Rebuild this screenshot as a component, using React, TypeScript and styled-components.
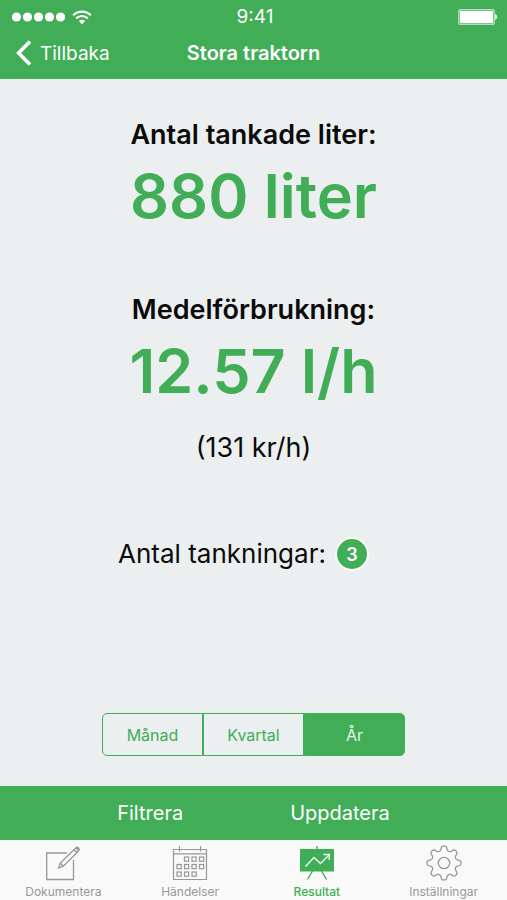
import React, { useState } from "react";
import styled, { createGlobalStyle } from "styled-components";

const green = "#41ad56";
const grey = "#98989a";

const GlobalStyle = createGlobalStyle`
  * { box-sizing: border-box; }
  body {
    margin: 0;
    background: #ebeff0;
    font-family: Inter, "Liberation Sans", sans-serif;
    -webkit-font-smoothing: antialiased;
  }
  button { font-family: inherit; cursor: pointer; }
  h1, h2, p { margin: 0; }
`;

const Screen = styled.div`
  display: flex;
  flex-direction: column;
  min-height: 100vh;
`;

const Header = styled.header`
  background: ${green};
  color: #fff;
  padding-bottom: 7px;
`;

const StatusBar = styled.div`
  display: grid;
  grid-template-columns: 1fr auto 1fr;
  align-items: center;
  height: 34px;
  padding: 0 9px 0 12px;
`;

const Signal = styled.div`
  display: flex;
  align-items: center;
  gap: 7px;
`;

const Clock = styled.time`
  font-size: 19px;
  line-height: 34px;
`;

const BatterySlot = styled.div`
  display: flex;
  justify-content: flex-end;
`;

const NavBar = styled.nav`
  display: grid;
  grid-template-columns: 1fr auto 1fr;
  align-items: center;
  height: 38px;
  padding: 0 16px;
`;

const BackLink = styled.a`
  display: flex;
  align-items: center;
  gap: 8px;
  color: #fff;
  font-size: 19px;
  text-decoration: none;
`;

const Title = styled.h1`
  font-size: 20px;
  font-weight: 600;
`;

const Main = styled.main`
  flex: 1;
  display: flex;
  flex-direction: column;
  align-items: center;
  padding: 39px 16px 30px;
  color: #0b0b0b;
`;

const Stat = styled.section<{ $after: number }>`
  display: flex;
  flex-direction: column;
  align-items: center;
  gap: 8px;
  margin-bottom: ${(p) => p.$after}px;
`;

const StatLabel = styled.h2`
  font-size: 27px;
  font-weight: 600;
  line-height: 34px;
`;

const StatValue = styled.p`
  color: ${green};
  font-size: 61px;
  font-weight: 600;
  line-height: 72px;
`;

const Detail = styled.p`
  font-size: 27px;
  line-height: 34px;
`;

const CountLabel = styled.p`
  font-size: 26px;
  line-height: 34px;
`;

const CountRow = styled.div`
  display: flex;
  align-items: center;
  gap: 9px;
  margin: 72px 0 32px;
  padding-right: 20px;
`;

const Badge = styled.span`
  display: flex;
  align-items: center;
  justify-content: center;
  width: 34px;
  height: 34px;
  border: 2px solid #f8fbf9;
  border-radius: 50%;
  background: ${green};
  color: #fff;
  font-size: 18px;
  font-weight: 600;
`;

const Segments = styled.div`
  display: flex;
  width: calc(64% - 1px);
  height: 43px;
  margin-top: auto;
`;

const Segment = styled.button<{ $active: boolean }>`
  flex: 1 1 0;
  padding: 0;
  border: 1px solid ${green};
  background: ${(p) => (p.$active ? green : "transparent")};
  color: ${(p) => (p.$active ? "#e6f6e8" : green)};
  font-size: 16px;

  &:first-child { border-radius: 5px 0 0 5px; }
  &:last-child { border-radius: 0 5px 5px 0; }
`;

const Toolbar = styled.div`
  display: flex;
  justify-content: center;
  gap: 107px;
  height: 54px;
  background: ${green};
`;

const ToolbarButton = styled.button`
  padding: 0;
  border: 0;
  background: none;
  color: #fff;
  font-size: 20px;
`;

const TabBar = styled.nav`
  display: grid;
  grid-template-columns: repeat(4, 1fr);
  height: 60px;
  background: #f9f9f9;
`;

const Tab = styled.a<{ $active?: boolean }>`
  display: flex;
  flex-direction: column;
  align-items: center;
  gap: 3px;
  padding-top: 5px;
  color: ${(p) => (p.$active ? green : grey)};
  font-size: 12px;
  font-weight: ${(p) => (p.$active ? 500 : 400)};
  line-height: 16px;
  text-decoration: none;
`;

const SignalIcon = () => (
  <svg width="53" height="10" viewBox="0 0 53 10" fill="#fff" aria-hidden="true">
    {[5, 16, 27, 38, 49].map((x) => (
      <circle key={x} cx={x - 0.5} cy="5" r="4.6" />
    ))}
  </svg>
);

const WifiIcon = () => (
  <svg width="20" height="15" viewBox="0 0 20 15" fill="none" stroke="#fff" strokeWidth="2.2" aria-hidden="true">
    <path d="M1.2 5.2C6.2 .4 13.8 .4 18.8 5.2" />
    <path d="M4.2 8.4C7.5 5.2 12.5 5.2 15.8 8.4" />
    <path d="M6.8 11C8.6 9.3 11.4 9.3 13.2 11L10 14.2Z" fill="#fff" stroke="none" />
  </svg>
);

const BatteryIcon = () => (
  <svg width="40" height="16" viewBox="0 0 40 16" aria-hidden="true">
    <rect x=".8" y=".8" width="35.4" height="14.4" rx="1.8" fill="none" stroke="#b5dfbc" strokeWidth="1.5" />
    <rect x="2" y="2" width="33" height="12" rx=".8" fill="#fff" />
    <path d="M37 5c1.5 .5 2.3 1.6 2.3 3s-.8 2.5-2.3 3Z" fill="#d5eed8" />
  </svg>
);

const BackIcon = () => (
  <svg width="16" height="26" viewBox="0 0 16 26" fill="none" stroke="#fff" strokeWidth="3.6" aria-hidden="true">
    <path d="M14 1.5L2.6 13L14 24.5" />
  </svg>
);

const ComposeIcon = () => (
  <svg width="36" height="36" viewBox="0 0 36 36" fill="none" stroke="currentColor" strokeWidth="1.3" aria-hidden="true">
    <path d="M22 8H1.7V34.5H28.5V15" />
    <path d="M13.5 23L15.3 18L31 2.8Q32.3 1.7 33.6 2.9Q35 4.3 33.7 5.7L18.3 21.2Z" />
    <path d="M15.3 18L18.3 21.2M29 4.7L32 7.5" />
    <path d="M30.5 3.3L32.3 1.9L34.3 3.9L33 6Z" fill="currentColor" stroke="none" />
  </svg>
);

const dayCells = [
  [13, 12], [20.5, 12], [28, 12],
  [5.5, 19.5], [13, 19.5], [20.5, 19.5], [28, 19.5],
  [5.5, 27], [13, 27], [20.5, 27],
];

const CalendarIcon = () => (
  <svg width="36" height="36" viewBox="0 0 36 36" fill="none" stroke="currentColor" strokeWidth="1.2" aria-hidden="true">
    <path d="M1.5 4.5H34.5V34.5H1.5ZM1.5 8.8H34.5M7.5 1V6.5M28.5 1V6.5" />
    {dayCells.map(([x, y]) => (
      <rect key={`${x}-${y}`} x={x - 0.5} y={y} width="4.2" height="4.2" />
    ))}
  </svg>
);

const ChartIcon = () => (
  <svg width="36" height="36" viewBox="0 0 36 36" fill="none" stroke="currentColor" strokeWidth="1.4" aria-hidden="true">
    <path d="M18 1V4M13.5 26L8.5 34.5M22.5 26L27.5 34.5" />
    <rect x="1" y="4" width="34" height="22.5" fill="currentColor" stroke="none" />
    <path d="M6.5 21.5L15 12.5L21.5 18.5L30 10M24.5 9.5H30.3V15" stroke="#eefaf0" />
  </svg>
);

const gearPoints = Array.from({ length: 160 }, (_, i) => {
  const a = (i / 160) * Math.PI * 2;
  const r = 14.8 + 2.3 * Math.tanh(1.8 * Math.cos(8 * a));
  return `${(18 + r * Math.sin(a)).toFixed(2)},${(18 - r * Math.cos(a)).toFixed(2)}`;
}).join(" ");

const GearIcon = () => (
  <svg width="36" height="36" viewBox="0 0 36 36" fill="none" stroke="currentColor" strokeWidth="1.3" strokeLinejoin="round" aria-hidden="true">
    <polygon points={gearPoints} />
    <circle cx="18" cy="18" r="5.7" />
  </svg>
);

const periods = ["Månad", "Kvartal", "År"];

export default function App() {
  const [period, setPeriod] = useState("År");

  return (
    <>
      <GlobalStyle />
      <Screen>
        <Header>
          <StatusBar>
            <Signal>
              <SignalIcon />
              <WifiIcon />
            </Signal>
            <Clock>9:41</Clock>
            <BatterySlot>
              <BatteryIcon />
            </BatterySlot>
          </StatusBar>
          <NavBar>
            <BackLink href="#tillbaka">
              <BackIcon />
              Tillbaka
            </BackLink>
            <Title>Stora traktorn</Title>
          </NavBar>
        </Header>
        <Main>
          <Stat $after={61}>
            <StatLabel>Antal tankade liter:</StatLabel>
            <StatValue>880 liter</StatValue>
          </Stat>
          <Stat $after={24}>
            <StatLabel>Medelförbrukning:</StatLabel>
            <StatValue>12.57 l/h</StatValue>
          </Stat>
          <Detail>(131 kr/h)</Detail>
          <CountRow>
            <CountLabel>Antal tankningar:</CountLabel>
            <Badge>3</Badge>
          </CountRow>
          <Segments role="group" aria-label="Period">
            {periods.map((p) => (
              <Segment key={p} type="button" $active={p === period} aria-pressed={p === period} onClick={() => setPeriod(p)}>
                {p}
              </Segment>
            ))}
          </Segments>
        </Main>
        <Toolbar>
          <ToolbarButton type="button">Filtrera</ToolbarButton>
          <ToolbarButton type="button">Uppdatera</ToolbarButton>
        </Toolbar>
        <TabBar>
          <Tab href="#dokumentera">
            <ComposeIcon />
            Dokumentera
          </Tab>
          <Tab href="#handelser">
            <CalendarIcon />
            Händelser
          </Tab>
          <Tab href="#resultat" $active aria-current="page">
            <ChartIcon />
            Resultat
          </Tab>
          <Tab href="#installningar">
            <GearIcon />
            Inställningar
          </Tab>
        </TabBar>
      </Screen>
    </>
  );
}
